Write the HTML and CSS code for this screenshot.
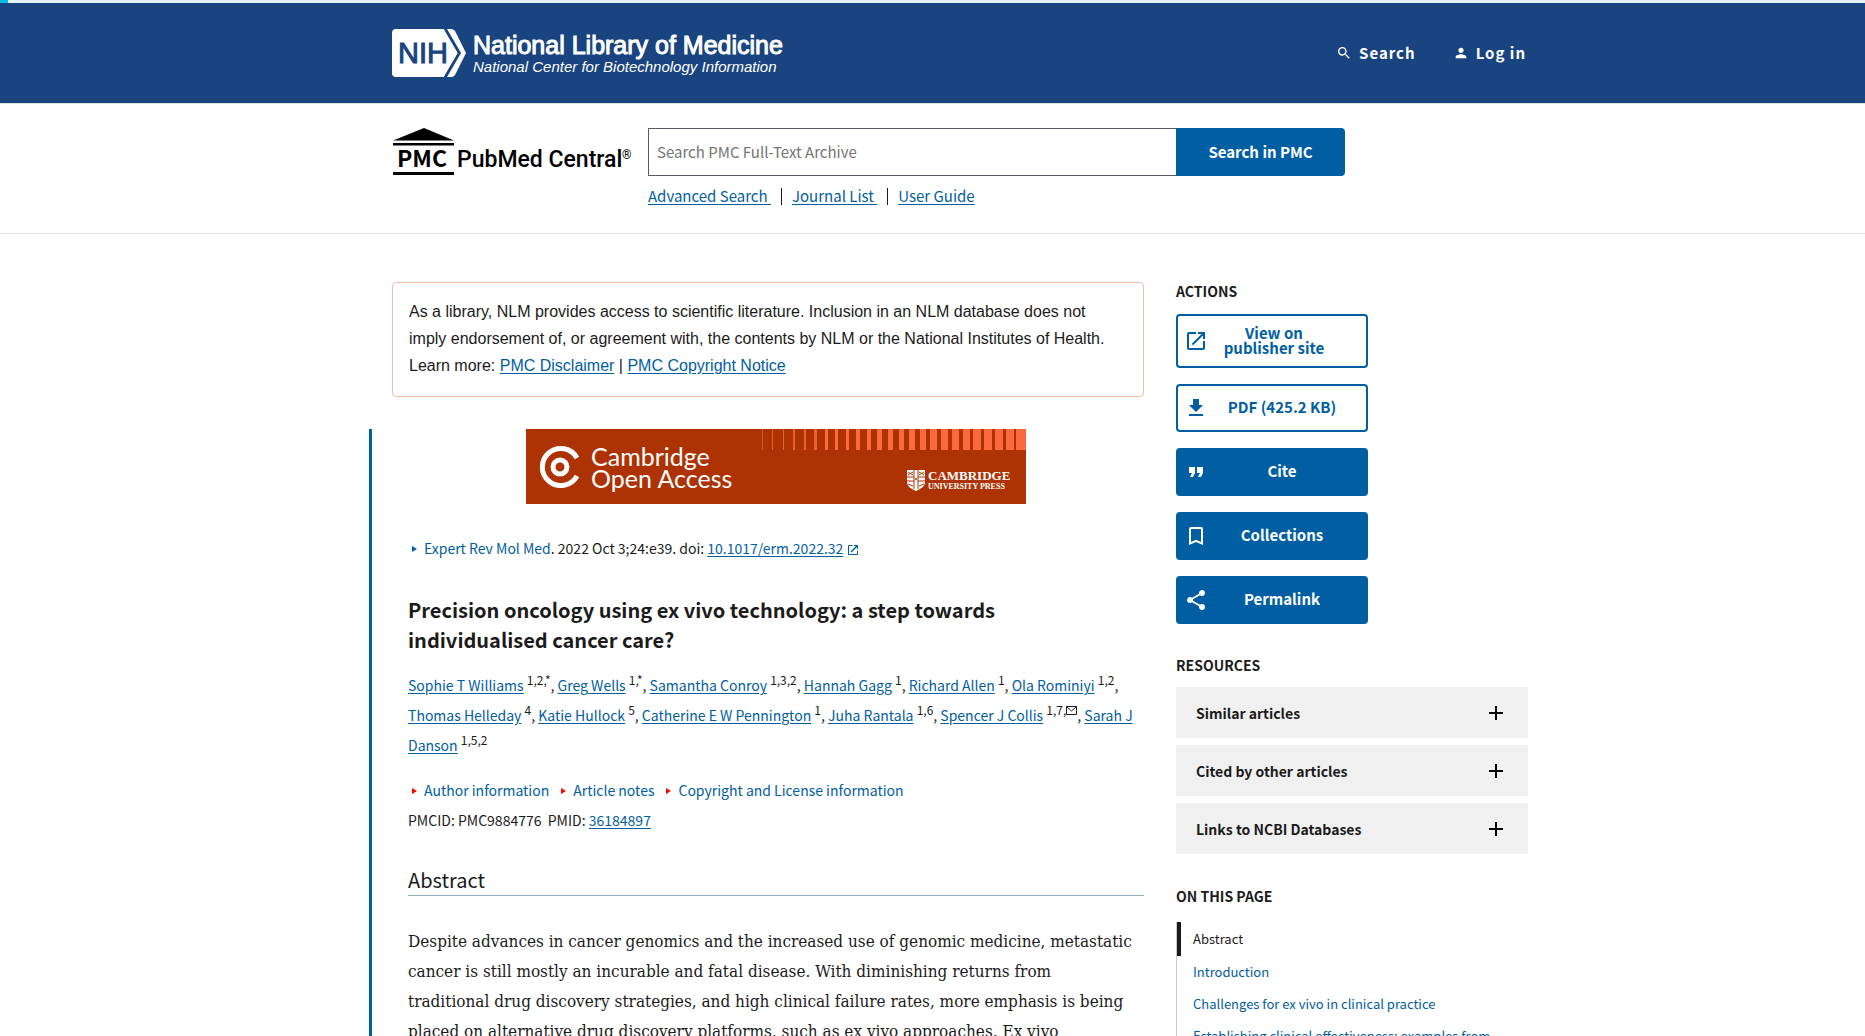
FILE: index.html
```html
<!DOCTYPE html>
<html lang="en">
<head>
    <meta charset="UTF-8">
    <meta name="viewport" content="width=device-width, initial-scale=1.0">
    <title>Precision oncology using ex vivo technology: a step towards individualised cancer care? - PMC</title>
    <link rel="stylesheet" href="styles.css">
</head>
<body>
    <div class="progress"><div class="progress-bar"></div></div>
    <header class="ncbi-header">
        <div class="container header-inner">
            <a href="#" class="nih-logo">
                <svg width="74" height="48" viewBox="0 0 74 48" role="img" aria-label="NIH">
                    <path fill="#fff" d="M4 0h48l14 24-14 24H4a4 4 0 0 1-4-4V4a4 4 0 0 1 4-4z"/>
                    <path fill="#fff" d="M55 0h4c2 0 3 1 4 2l11 22-11 22c-1 1-2 2-4 2h-4l14-24z"/>
                    <path fill="none" stroke="#1a4480" stroke-width="2" d="M53 0l14 24-14 24"/>
                    <text x="6" y="34" class="nih-text">NIH</text>
                </svg>
                <span class="nih-names">
                    <span class="nih-title">National Library of Medicine</span>
                    <span class="nih-sub">National Center for Biotechnology Information</span>
                </span>
            </a>
            <nav class="header-nav">
                <button type="button" class="header-link">
                    <svg width="16" height="16" viewBox="0 0 24 24" fill="#fff"><path d="M15.5 14h-.79l-.28-.27A6.47 6.47 0 0 0 16 9.5 6.5 6.5 0 1 0 9.500 16c1.610 0 3.090-.59 4.230-1.570l.27.28v.79l5 4.990L20.490 19l-4.990-5zm-6 0C7.010 14 5 11.990 5 9.500S7.010 5 9.500 5 14 7.010 14 9.500 11.990 14 9.500 14z"/></svg>
                    Search
                </button>
                <a href="#" class="header-link">
                    <svg width="16" height="16" viewBox="0 0 24 24" fill="#fff"><path d="M12 12c2.210 0 4-1.790 4-4s-1.790-4-4-4-4 1.790-4 4 1.790 4 4 4zm0 2c-2.670 0-8 1.340-8 4v2h16v-2c0-2.660-5.330-4-8-4z"/></svg>
                    Log in
                </a>
            </nav>
        </div>
    </header>

    <section class="pmc-header">
        <div class="container pmc-inner">
            <a href="#" class="pmc-logo">
                <svg width="240" height="48" viewBox="0 0 240 48" role="img" aria-label="PubMed Central">
                    <path d="M1 12.500L32 0l30 12.500z"/>
                    <path d="M1 15h61v2.500H1zM1 44h61v3H1z"/>
                    <text x="5" y="39" class="pmc-mark">PMC</text>
                    <text x="65" y="39" class="pmc-name">PubMed Central</text>
                    <text x="230" y="31" class="pmc-reg">®</text>
                </svg>
            </a>
            <div class="pmc-search">
                <form class="search-form">
                    <input type="search" id="pmc-search" aria-label="Search PMC Full-Text Archive" placeholder="Search PMC Full-Text Archive">
                    <button type="submit">Search in PMC</button>
                </form>
                <div class="search-links">
                    <a href="#">Advanced Search&nbsp;</a><span class="sep"></span><a href="#">Journal List&nbsp;</a><span class="sep"></span><a href="#">User Guide</a>
                </div>
            </div>
        </div>
    </section>

    <div class="container page">
        <main>
            <div class="disclaimer">
                As a library, NLM provides access to scientific literature. Inclusion in an NLM database does not imply endorsement of, or agreement with, the contents by NLM or the National Institutes of Health.<br>
                Learn more: <a href="#">PMC Disclaimer</a> | <a href="#">PMC Copyright Notice</a>
            </div>
            <article>
                <a href="#" class="banner">
                    <svg width="500" height="75" viewBox="0 0 500 75" role="img" aria-label="Cambridge Open Access, Cambridge University Press">
                        <rect width="500" height="75" fill="#ad3204"/>
                        <g fill="#fa6a3c">
                            <rect x="236" width="1" height="21" opacity=".6"/>
                            <rect x="246" width="1" height="21" opacity=".8"/>
                            <rect x="257" width="1" height="21" opacity=".8"/>
                            <rect x="267" width="2" height="21" opacity=".8"/>
                            <rect x="278" width="2" height="21" opacity=".8"/>
                            <rect x="288" width="3" height="21" opacity=".8"/>
                            <rect x="299" width="3" height="21"/>
                            <rect x="309" width="3" height="21"/>
                            <rect x="320" width="3" height="21"/>
                            <rect x="330" width="4" height="21"/>
                            <rect x="341" width="4" height="21"/>
                            <rect x="351" width="5" height="21"/>
                            <rect x="362" width="5" height="21"/>
                            <rect x="373" width="5" height="21"/>
                            <rect x="383" width="6" height="21"/>
                            <rect x="394" width="6" height="21"/>
                            <rect x="404" width="7" height="21"/>
                            <rect x="415" width="7" height="21"/>
                            <rect x="426" width="7" height="21"/>
                            <rect x="437" width="7" height="21"/>
                            <rect x="447" width="8" height="21"/>
                            <rect x="458" width="8" height="21"/>
                            <rect x="469" width="8" height="21"/>
                            <rect x="480" width="8" height="21"/>
                            <rect x="490" width="10" height="21"/>
                        </g>
                        <g fill="none" stroke="#fff">
                            <path stroke-width="5" d="M51 29A18.500 18.500 0 1 0 51 47"/>
                            <circle cx="34" cy="38" r="7" stroke-width="5"/>
                        </g>
                        <text x="65" y="37" class="oa-text">Cambridge</text>
                        <text x="65" y="59" class="oa-text">Open Access</text>
                        <path fill="#fff" d="M381 41h18v12c0 5-5 7-9 9-4-2-9-4-9-9z"/>
                        <path stroke="#ad3204" stroke-width="1" fill="none" d="M388 41v19M392 41v19M381 48h7M392 48h7M381 52h7M392 52h7M382 43l5 3M387 43l-5 3M393 43l5 3M398 43l-5 3M382 55l5 2M393 57l5-2"/>
                        <circle cx="390" cy="50" r="1" fill="#ad3204"/>
                        <text x="402" y="51" class="cup-name">CAMBRIDGE</text>
                        <text x="402" y="60" class="cup-press">UNIVERSITY PRESS</text>
                    </svg>
                </a>
                <div class="citation">
                    <svg class="arrow" width="16" height="16" viewBox="0 0 16 16" fill="#005ea2"><path d="M4 5l5 3-5 3z"/></svg><a href="#" class="plain">Expert Rev Mol Med</a>. 2022 Oct 3;24:e39. doi: <a href="#">10.1017/erm.2022.32</a>
                    <svg class="ext" width="12" height="12" viewBox="0 0 24 24" fill="#005ea2"><path d="M20 20H4V4h7V2H4a2 2 0 0 0-2 2v16c0 1.100.9 2 2 2h16a2 2 0 0 0 2-2v-7h-2v7zM14 2v2h4L7 15l2 2L20 6v4h2V2h-8z"/></svg>
                </div>
                <h1>Precision oncology using ex vivo technology: a step towards<br>individualised cancer care?</h1>
                <div class="authors">
                    <a href="#">Sophie T Williams</a> <sup>1,2,*</sup>, <a href="#">Greg Wells</a> <sup>1,*</sup>, <a href="#">Samantha Conroy</a> <sup>1,3,2</sup>, <a href="#">Hannah Gagg</a> <sup>1</sup>, <a href="#">Richard Allen</a> <sup>1</sup>, <a href="#">Ola Rominiyi</a> <sup>1,2</sup>, <a href="#">Thomas Helleday</a> <sup>4</sup>, <a href="#">Katie Hullock</a> <sup>5</sup>, <a href="#">Catherine E W Pennington</a> <sup>1</sup>, <a href="#">Juha Rantala</a> <sup>1,6</sup>, <a href="#">Spencer J Collis</a> <sup>1,7,<svg width="11" height="9" viewBox="0 0 11 9" fill="none" stroke="#1b1b1b"><path d="M.5.5h10v8H.5zM1 1l4.500 4L10 1"/></svg></sup>, <a href="#">Sarah J Danson</a> <sup>1,5,2</sup>
                </div>
                <div class="notes">
                    <a href="#" class="plain"><svg class="arrow" width="16" height="16" viewBox="0 0 16 16" fill="#f00"><path d="M4 5l5 3-5 3z"/></svg>Author information</a>
                    <a href="#" class="plain"><svg class="arrow" width="16" height="16" viewBox="0 0 16 16" fill="#f00"><path d="M4 5l5 3-5 3z"/></svg>Article notes</a>
                    <a href="#" class="plain"><svg class="arrow" width="16" height="16" viewBox="0 0 16 16" fill="#f00"><path d="M4 5l5 3-5 3z"/></svg>Copyright and License information</a>
                </div>
                <div class="ids">PMCID: PMC9884776&nbsp; PMID: <a href="#">36184897</a></div>
                <h2>Abstract</h2>
                <p>Despite advances in cancer genomics and the increased use of genomic medicine, metastatic cancer is still mostly an incurable and fatal disease. With diminishing returns from<br>traditional drug discovery strategies, and high clinical failure rates, more emphasis is being<br>placed on alternative drug discovery platforms, such as ex vivo approaches. Ex vivo</p>
            </article>
        </main>

        <aside>
            <h3>Actions</h3>
            <div class="actions">
                <a href="#" class="action outline tall">
                    <svg width="24" height="24" viewBox="0 0 24 24"><path d="M19 19H5V5h7V3H5a2 2 0 0 0-2 2v14a2 2 0 0 0 2 2h14c1.100 0 2-.9 2-2v-7h-2v7zM14 3v2h3.590l-9.830 9.830 1.410 1.410L19 6.410V10h2V3h-7z"/></svg>
                    <span>View on<br>publisher site</span>
                </a>
                <a href="#" class="action outline">
                    <svg width="24" height="24" viewBox="0 0 24 24"><path d="M19 9h-4V3H9v6H5l7 7 7-7zM5 18v2h14v-2H5z"/></svg>
                    <span>PDF (425.2 KB)</span>
                </a>
                <button type="button" class="action">
                    <svg width="24" height="24" viewBox="0 0 24 24"><path d="M6 17h3l2-4V7H5v6h3zm8 0h3l2-4V7h-6v6h3z"/></svg>
                    <span>Cite</span>
                </button>
                <button type="button" class="action">
                    <svg width="24" height="24" viewBox="0 0 24 24"><path d="M17 3H7c-1.100 0-2 .9-2 2v16l7-3 7 3V5a2 2 0 0 0-2-2zm0 15l-5-2.180L7 18V5h10v13z"/></svg>
                    <span>Collections</span>
                </button>
                <button type="button" class="action">
                    <svg width="24" height="24" viewBox="0 0 24 24"><path d="M18 16.080c-.76 0-1.440.3-1.960.77L8.910 12.700c.05-.23.09-.46.09-.7s-.04-.47-.09-.7l7.050-4.110A2.990 2.990 0 1 0 15 5c0 .24.04.47.09.7L8.040 9.810A2.990 2.990 0 1 0 6 15c.79 0 1.500-.31 2.040-.81l7.120 4.160c-.05.21-.08.43-.08.65a2.920 2.920 0 1 0 2.920-2.920z"/></svg>
                    <span>Permalink</span>
                </button>
            </div>

            <h3>Resources</h3>
            <div class="resources">
                <button type="button">Similar articles <svg width="24" height="24" viewBox="0 0 24 24"><path d="M19 13h-6v6h-2v-6H5v-2h6V5h2v6h6z"/></svg></button>
                <button type="button">Cited by other articles <svg width="24" height="24" viewBox="0 0 24 24"><path d="M19 13h-6v6h-2v-6H5v-2h6V5h2v6h6z"/></svg></button>
                <button type="button">Links to NCBI Databases <svg width="24" height="24" viewBox="0 0 24 24"><path d="M19 13h-6v6h-2v-6H5v-2h6V5h2v6h6z"/></svg></button>
            </div>

            <h3>On this page</h3>
            <ul class="toc">
                <li><a href="#" class="current">Abstract</a></li>
                <li><a href="#">Introduction</a></li>
                <li><a href="#">Challenges for ex vivo in clinical practice</a></li>
                <li><a href="#">Establishing clinical effectiveness: examples from</a></li>
            </ul>
        </aside>
    </div>
</body>
</html>
```
FILE: styles.css
```css
* {
    box-sizing: border-box;
}
html {
    height: 100%;
    overflow: hidden;
}
body {
    margin: 0;
    height: 100%;
    overflow: hidden;
    background-color: #fff;
    color: #1b1b1b;
    font-family: "Noto Sans CJK SC", "Noto Sans", sans-serif;
    font-size: 14px;
    line-height: 30px;
}
a {
    color: #005ea2;
    text-underline-offset: 2px;
}
button, input {
    font-family: inherit;
    font-size: 14px;
}
.container {
    max-width: 1201px;
    margin: 0 auto;
    padding: 0 5px 0 60px;
}
.progress {
    height: 3px;
    background-color: #e1f3f8;
}
.progress-bar {
    width: 8px;
    height: 3px;
    background-color: #00bde3;
}

/* header */
.ncbi-header {
    background-color: #1a4480;
}
.header-inner {
    display: flex;
    justify-content: space-between;
    align-items: center;
    height: 100px;
}
.nih-logo {
    display: flex;
    gap: 7px;
    color: #fff;
    text-decoration: none;
    font-family: "Liberation Sans", Arial, sans-serif;
}
.nih-names {
    display: flex;
    flex-direction: column;
    padding-top: 3px;
}
.nih-text {
    font-family: "Liberation Sans", Arial, sans-serif;
    font-size: 29px;
    fill: #1a4480;
    stroke: #1a4480;
}
.nih-title {
    font-size: 25px;
    line-height: 26px;
    -webkit-text-stroke: 1px #fff;
}
.nih-sub {
    font-size: 15px;
    line-height: 18px;
    font-style: italic;
}
.header-nav {
    display: flex;
    gap: 37px;
    padding-right: 2px;
}
.header-link {
    display: flex;
    align-items: center;
    gap: 7px;
    padding: 0;
    border: none;
    background: none;
    color: #fff;
    font-size: 15px;
    font-weight: bold;
    letter-spacing: 1px;
    text-decoration: none;
    line-height: 24px;
    cursor: pointer;
}

/* search */
.pmc-header {
    border-top: 1px solid #dfe1e2;
    border-bottom: 1px solid #dfe1e2;
}
.pmc-inner {
    display: flex;
    gap: 16px;
    padding-top: 24px;
    padding-bottom: 22px;
}
.pmc-logo svg {
    display: block;
}
.pmc-mark {
    font-size: 23px;
    font-weight: bold;
}
.pmc-name {
    font-family: Roboto, sans-serif;
    font-size: 23px;
    font-weight: 500;
}
.pmc-reg {
    font-family: Roboto, sans-serif;
    font-size: 12px;
}
.pmc-search {
    width: 697px;
}
.search-form {
    display: flex;
    height: 48px;
}
.search-form input {
    flex: 1;
    padding: 0 8px 2px;
    border: 1px solid #565c65;
    border-right: none;
    border-radius: 0;
    font-size: 15px;
    appearance: none;
}
.search-form input::placeholder {
    color: #757575;
}
.search-form button {
    width: 169px;
    padding-bottom: 3px;
    border: none;
    border-radius: 0 4px 4px 0;
    background-color: #005ea2;
    color: #fff;
    font-size: 15px;
    font-weight: bold;
    cursor: pointer;
}
.search-links {
    display: flex;
    align-items: center;
    margin-top: 5px;
    font-size: 15px;
}
.sep {
    width: 1px;
    height: 17px;
    margin: 0 10px;
    background-color: #1b1b1b;
}

/* page */
.page {
    display: grid;
    grid-template-columns: 1fr 352px;
    gap: 32px;
    padding-top: 48px;
    padding-left: 37px;
}
.disclaimer {
    margin: 0 0 32px 23px;
    padding: 15px 16px 17px;
    border: 1px solid #f0bfa5;
    border-radius: 4px;
    font-family: "Liberation Sans", Arial, sans-serif;
    font-size: 16px;
    line-height: 27px;
}
article {
    padding-left: 36px;
    border-left: 3px solid #005ea2;
}
.banner {
    display: block;
}
.banner svg {
    display: block;
    margin: 0 auto;
}
.oa-text {
    font-family: Lato, sans-serif;
    font-size: 25px;
    fill: #fff;
}
.cup-name {
    font-family: "Liberation Serif", serif;
    font-size: 13px;
    font-weight: bold;
    fill: #fff;
}
.cup-press {
    font-family: "Liberation Serif", serif;
    font-size: 8px;
    font-weight: bold;
    fill: #fff;
}
.plain {
    text-decoration: none;
}
.arrow {
    vertical-align: -3px;
}
.ext {
    vertical-align: -2px;
}
.citation {
    margin-top: 29px;
}
h1 {
    margin: 32px 0 15px;
    font-size: 20px;
    line-height: 30px;
}
sup {
    font-size: 12px;
    line-height: 0;
}
.notes {
    display: flex;
    gap: 8px;
    margin-top: 15px;
}
h2 {
    margin: 30px 0;
    border-bottom: 1px solid #97b0cb;
    font-size: 20px;
    font-weight: normal;
    line-height: 30px;
}
p {
    margin: 0;
    font-family: "DejaVu Serif Condensed", "DejaVu Serif", serif;
    font-size: 17px;
}

/* sidebar */
h3 {
    margin: 0;
    font-size: 14px;
    line-height: 18px;
    text-transform: uppercase;
}
.actions {
    display: flex;
    flex-direction: column;
    gap: 16px;
    width: 192px;
    margin: 14px 0 32px;
}
.action {
    display: flex;
    align-items: center;
    height: 48px;
    padding: 0 12px 0 8px;
    border: none;
    border-radius: 4px;
    background-color: #005ea2;
    color: #fff;
    fill: #fff;
    font-size: 15px;
    font-weight: bold;
    line-height: 15px;
    text-align: center;
    text-decoration: none;
    cursor: pointer;
}
.action span {
    flex: 1;
    padding-bottom: 3px;
}
.outline {
    padding: 0 10px 0 6px;
    border: 2px solid #005ea2;
    background-color: #fff;
    color: #005ea2;
    fill: #005ea2;
}
.tall {
    height: 54px;
    padding-right: 26px;
}
.resources {
    display: flex;
    flex-direction: column;
    gap: 7px;
    margin: 13px 0 33px;
}
.resources button {
    display: flex;
    justify-content: space-between;
    align-items: center;
    height: 51px;
    padding: 0 20px;
    border: none;
    background-color: #f0f0f0;
    color: #1b1b1b;
    font-weight: bold;
    cursor: pointer;
}
.toc {
    margin: 17px 0 0;
    padding: 0;
    border-left: 1px solid #c6cace;
    list-style: none;
    font-size: 13px;
}
.toc a {
    display: block;
    padding-left: 16px;
    line-height: 32px;
    text-decoration: none;
}
.toc .current {
    padding-left: 12px;
    border-left: 4px solid #1b1b1b;
    color: #1b1b1b;
    line-height: 34px;
}
```
